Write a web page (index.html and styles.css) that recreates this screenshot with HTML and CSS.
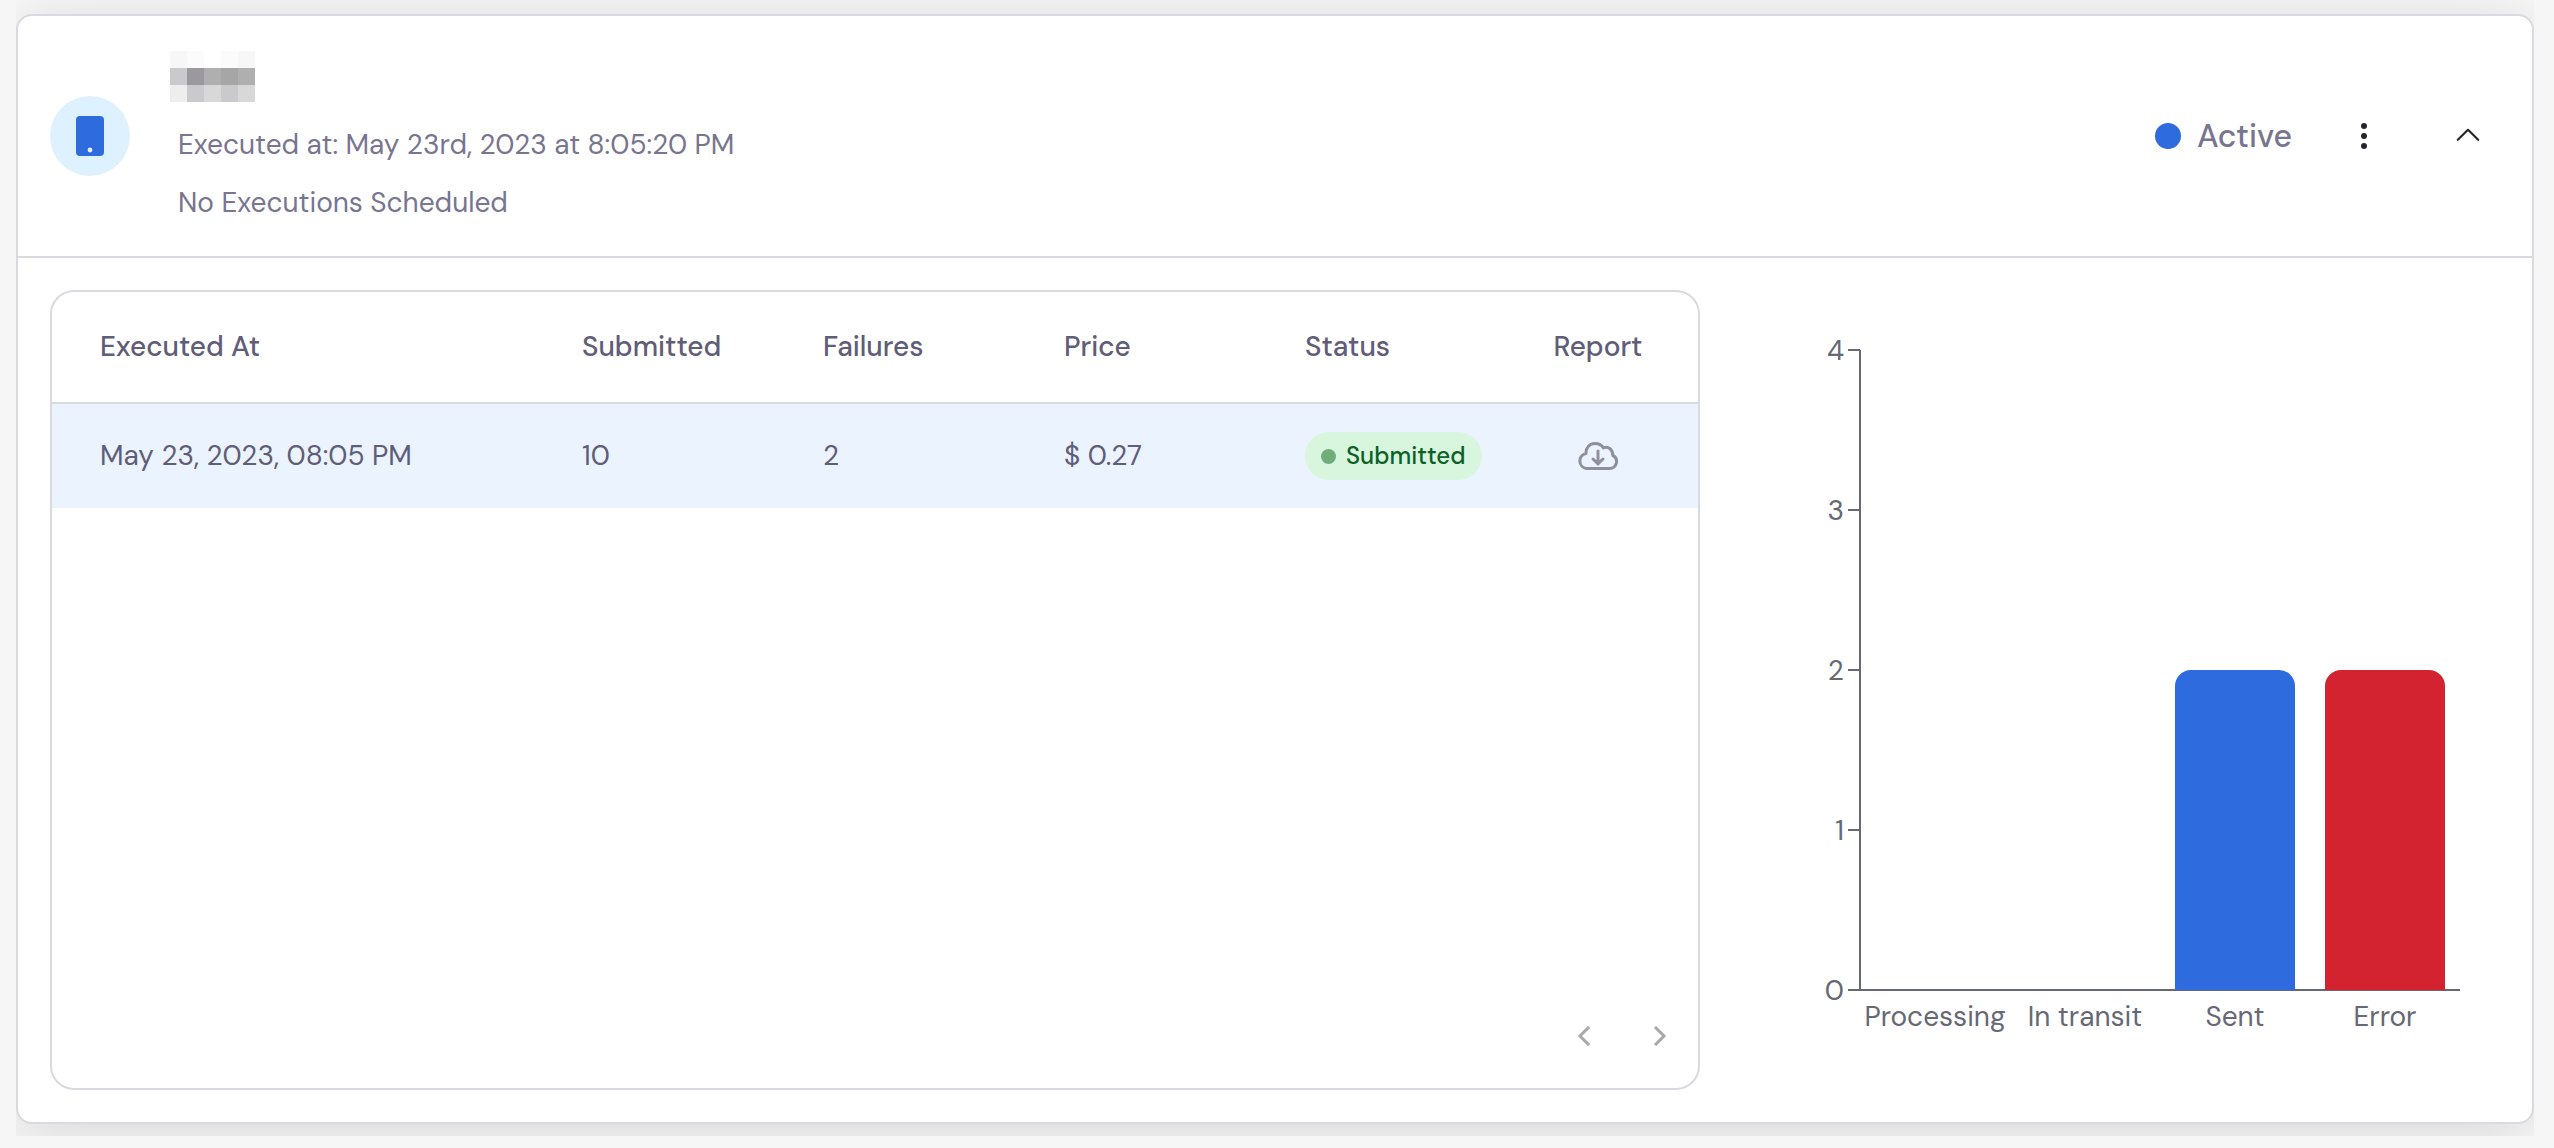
FILE: index.html
```html
<!DOCTYPE html>
<html lang="en">
<head>
    <meta charset="UTF-8">
    <meta name="viewport" content="width=device-width, initial-scale=1.0">
    <title>Campaign Executions</title>
    <link rel="stylesheet" href="styles.css">
</head>
<body>
    <main class="page">
        <section class="card">
            <header class="card-header">
                <div class="avatar">
                    <svg width="28" height="40" viewBox="0 0 28 40" aria-hidden="true">
                        <rect width="28" height="40" rx="4" fill="#2e6bde"/>
                        <circle cx="14" cy="34" r="2.4" fill="#def1ff"/>
                    </svg>
                </div>
                <div class="info">
                    <!-- campaign name, masked -->
                    <div class="masked-name">
                        <i class="m1"></i><i class="m0"></i><i></i><i class="m0"></i><i class="m1"></i>
                        <i class="m4"></i><i class="m7"></i><i class="m5"></i><i class="m6"></i><i class="m5"></i>
                        <i class="m2"></i><i class="m4"></i><i class="m3"></i><i class="m4"></i><i class="m3"></i>
                    </div>
                    <p>Executed at: May 23rd, 2023 at 8:05:20 PM</p>
                    <p>No Executions Scheduled</p>
                </div>
                <div class="actions">
                    <div class="state"><span class="state-dot"></span>Active</div>
                    <button type="button" class="icon-button" aria-label="More options">
                        <svg width="8" height="28" viewBox="0 0 8 28" fill="#25252d">
                            <circle cx="4" cy="4" r="3"/>
                            <circle cx="4" cy="14" r="3"/>
                            <circle cx="4" cy="24" r="3"/>
                        </svg>
                    </button>
                    <button type="button" class="icon-button" aria-label="Collapse">
                        <svg width="24" height="24" viewBox="0 0 24 24" fill="none" stroke="#25252d" stroke-width="2.2" stroke-linecap="round" stroke-linejoin="round">
                            <path d="M1.800 15.800 12 5.800l10.200 10"/>
                        </svg>
                    </button>
                </div>
            </header>

            <div class="card-body">
                <div class="panel">
                    <table>
                        <thead>
                            <tr>
                                <th class="col-date">Executed At</th>
                                <th>Submitted</th>
                                <th>Failures</th>
                                <th>Price</th>
                                <th>Status</th>
                                <th class="col-report">Report</th>
                            </tr>
                        </thead>
                        <tbody>
                            <tr>
                                <td class="col-date">May 23, 2023, 08:05 PM</td>
                                <td>10</td>
                                <td>2</td>
                                <td>$ 0.27</td>
                                <td><span class="badge">Submitted</span></td>
                                <td class="col-report">
                                    <button type="button" class="download" aria-label="Download report">
                                        <svg width="40" height="28" viewBox="0 0 40 28" fill="none" stroke="#8e909b" stroke-width="3" stroke-linecap="round" stroke-linejoin="round">
                                            <path d="M8.500 26.500h23a7 7 0 0 0 3.300-13.200C34.800 7.500 30.500 4 25.400 5.900 23.700 3.200 20.500 1.500 17 1.500c-5.200 0-9.300 4.200-9 10A7.600 7.600 0 0 0 8.500 26.500z"/>
                                            <path d="M20 9v12.500M15 17l5 4.800 5-4.800"/>
                                        </svg>
                                    </button>
                                </td>
                            </tr>
                        </tbody>
                    </table>
                    <nav class="pager" aria-label="Pagination">
                        <button type="button" aria-label="Previous page">
                            <svg width="14" height="20" viewBox="0 0 14 20" fill="none" stroke="#a9a9ab" stroke-width="3">
                                <path d="M12 1 3 10l9 9"/>
                            </svg>
                        </button>
                        <button type="button" aria-label="Next page">
                            <svg width="14" height="20" viewBox="0 0 14 20" fill="none" stroke="#a9a9ab" stroke-width="3">
                                <path d="m2 1 9 9-9 9"/>
                            </svg>
                        </button>
                    </nav>
                </div>

                <div class="chart">
                    <svg viewBox="0 0 800 800" role="img" aria-label="Messages by status">
                        <path class="axis" d="M148 60h12M148 220h12M148 380h12M148 540h12M148 700h12M160 60v640M160 700h600"/>
                        <path fill="#2e6bde" d="M475 700V396a16 16 0 0 1 16-16h88a16 16 0 0 1 16 16v304z"/>
                        <path fill="#d32331" d="M625 700V396a16 16 0 0 1 16-16h88a16 16 0 0 1 16 16v304z"/>
                        <g text-anchor="end">
                            <text x="144" y="70">4</text>
                            <text x="144" y="230">3</text>
                            <text x="144" y="390">2</text>
                            <text x="144" y="550">1</text>
                            <text x="144" y="710">0</text>
                        </g>
                        <g text-anchor="middle">
                            <text x="235" y="736">Processing</text>
                            <text x="385" y="736">In transit</text>
                            <text x="535" y="736">Sent</text>
                            <text x="685" y="736">Error</text>
                        </g>
                    </svg>
                </div>
            </div>
        </section>
    </main>
</body>
</html>
```

FILE: styles.css
```css
* {
    box-sizing: border-box;
}
body {
    margin: 0;
    background-color: #f6f6f6;
    font-family: "DM Sans", Inter, "Noto Sans", sans-serif;
    font-size: 28px;
    line-height: 36px;
    color: #5f5d78;
}
button {
    display: flex;
    align-items: center;
    justify-content: center;
    padding: 0;
    border: none;
    background: none;
    cursor: pointer;
}
.page {
    margin: 0 20px 0 16px;
    padding: 14px 0 12px;
    overflow: hidden;
}
.card {
    background-color: #fff;
    border: 2px solid #d9d9e0;
    border-radius: 16px;
    box-shadow: 0 10px 60px rgba(0, 0, 0, 0.12);
}

/* header */
.card-header {
    display: flex;
    align-items: center;
    height: 242px;
    padding: 0 32px;
    border-bottom: 2px solid #d9d9e0;
}
.avatar {
    display: flex;
    align-items: center;
    justify-content: center;
    width: 80px;
    height: 80px;
    margin-right: 40px;
    border-radius: 50%;
    background-color: #def1ff;
}
.info {
    flex: 1;
    padding-top: 10px;
    color: #77758f;
}
.info p {
    margin: 0;
    padding: 0 8px;
    line-height: 58px;
}
.masked-name {
    display: grid;
    grid-template-columns: repeat(5, 17px);
    grid-auto-rows: 17px;
    margin-bottom: 14px;
}
.m0 { background-color: #fbfbfb; }
.m1 { background-color: #f7f7f7; }
.m2 { background-color: #eeeeee; }
.m3 { background-color: #d8d8d8; }
.m4 { background-color: #cacacc; }
.m5 { background-color: #afafb0; }
.m6 { background-color: #a6a6a7; }
.m7 { background-color: #9b999e; }
.actions {
    display: flex;
    align-items: center;
    gap: 40px;
}
.state {
    display: flex;
    align-items: center;
    gap: 16px;
    font-size: 32px;
    font-weight: 500;
    color: #77758f;
}
.state-dot {
    width: 26px;
    height: 26px;
    border-radius: 50%;
    background-color: #2e6bde;
}
.icon-button {
    width: 64px;
    height: 64px;
}

/* body */
.card-body {
    display: grid;
    grid-template-columns: 33fr 16fr;
    padding: 32px;
}
.panel {
    display: flex;
    flex-direction: column;
    justify-content: space-between;
    border: 2px solid #d9d9e0;
    border-radius: 24px;
    overflow: hidden;
}
table {
    width: 100%;
    table-layout: fixed;
    border-collapse: separate;
    border-spacing: 0;
}
th,
td {
    padding: 0;
    text-align: left;
}
th {
    height: 112px;
    border-bottom: 2px solid #d9d9e0;
    font-weight: 500;
}
td {
    height: 104px;
    background-color: #ebf3fe;
}
.col-date {
    width: 32.2%;
    padding-left: 48px;
}
.col-report {
    width: 152px;
    padding-right: 48px;
    text-align: center;
}
.badge {
    display: inline-flex;
    align-items: center;
    gap: 10px;
    height: 48px;
    padding: 0 17px 0 16px;
    border-radius: 24px;
    background-color: #d8f5de;
    font-size: 24px;
    font-weight: 500;
    color: #0b6127;
    vertical-align: middle;
}
.badge::before {
    content: "";
    width: 15px;
    height: 15px;
    border-radius: 50%;
    background-color: #6fae7b;
}
.download {
    width: 100%;
}
.pager {
    display: flex;
    justify-content: flex-end;
}
.pager button {
    width: 76px;
    height: 104px;
}

/* chart */
.chart svg {
    display: block;
    width: 100%;
}
.chart text {
    font-size: 28px;
    fill: #666874;
}
.axis {
    fill: none;
    stroke: #666874;
    stroke-width: 2;
}
```
